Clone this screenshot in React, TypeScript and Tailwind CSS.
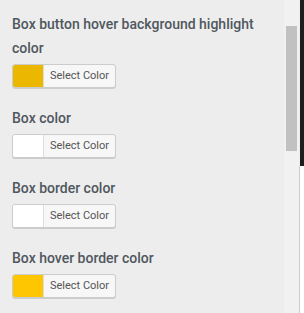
import React from 'react';

const FIELDS = [
  { label: 'Box button hover background highlight color', swatch: '#ebb700' },
  { label: 'Box color', swatch: '#ffffff' },
  { label: 'Box border color', swatch: '#ffffff' },
  { label: 'Box hover border color', swatch: '#fec600' },
];

export default function App() {
  return (
    <div className="flex w-[304px] h-[313px] overflow-hidden bg-[#ededed]" style={{ fontFamily: 'Roboto, "Liberation Sans", sans-serif' }}>
      {/* Panel content */}
      <div className="flex-1 pl-3 pt-3 pr-2">
        {FIELDS.map((f) => (
          <div key={f.label} className="mb-[18px]">
            <div className="text-[14px] leading-[24px] font-medium text-[#50575e]">{f.label}</div>
            <button
              className="mt-1 flex h-6 w-[104px] items-stretch rounded-[3px] border border-[#cccccc] bg-[#f7f7f7] shadow-[0_1px_0_#cccccc] overflow-hidden"
            >
              <span className="w-[31px] shrink-0 border-r border-[#dddddd]" style={{ background: f.swatch }} />
              <span className="flex flex-1 items-center justify-center text-[11px] text-[#555555]">Select Color</span>
            </button>
          </div>
        ))}
      </div>

      {/* Scrollbar */}
      <div className="w-[15px] shrink-0 bg-[#f1f1f1] pt-[26px] pl-[2px]">
        <div className="h-[125px] w-[11px] bg-[#c1c1c1]" />
      </div>

      {/* Edge strip */}
      <div className="flex w-[5px] shrink-0 flex-col">
        <div className="h-[166px] bg-[#1e1e1e] ml-px" />
        <div className="flex-1 border-l border-[#cccccc] bg-white" />
      </div>
    </div>
  );
}
